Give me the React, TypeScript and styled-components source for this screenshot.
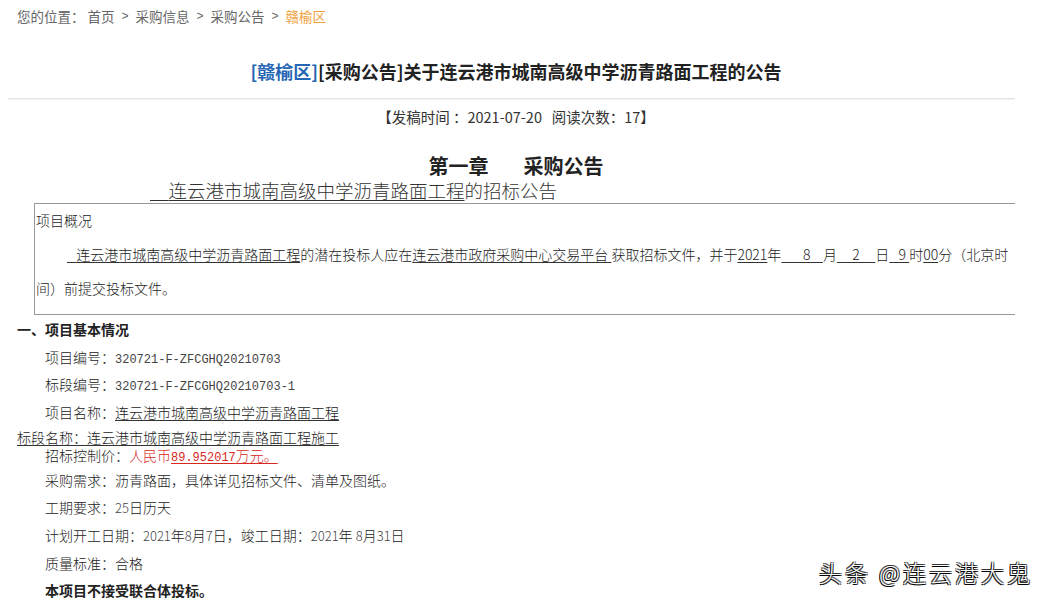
import { createGlobalStyle } from "styled-components";
import styled from "styled-components";

const GlobalStyle = createGlobalStyle`
  html, body {
    margin: 0;
    padding: 0;
    background: #fff;
  }
  body {
    font-family: "Noto Sans CJK SC", "Noto Sans", sans-serif;
    color: #333;
  }
`;

const Page = styled.div`
  position: relative;
  width: 1051px;
  height: 606px;
  box-sizing: border-box;
  padding: 0 27px 0 8px;
  overflow: hidden;
`;
const Crumbs = styled.div`
  display: flex;
  align-items: center;
  height: 32px;
  padding-left: 9px;
  font-size: 13.5px;
  color: #666;
`;
const CrumbSep = styled.span`
  margin: 0 7px;
  font-family: "Liberation Sans", sans-serif;
  font-size: 12px;
`;
const CrumbCurrent = styled.span`
  color: #f0a13c;
`;
const Title = styled.h1`
  margin: 24px 0 0;
  text-align: center;
  font-size: 18px;
  line-height: 30px;
  font-weight: bold;
  color: #222;
`;
const Area = styled.span`
  color: #2566b5;
`;
const Rule = styled.div`
  margin: 12px 9px 0 0;
  border-top: 1px solid #e4e4e4;
  border-bottom: 1px solid #f2f2f2;
`;
const Meta = styled.div`
  margin-top: 7px;
  text-align: center;
  font-size: 14.5px;
  line-height: 20px;
  color: #333;
  white-space: pre;
`;
const Chapter = styled.div`
  display: flex;
  justify-content: center;
  gap: 35px;
  margin-top: 25px;
  font-size: 20px;
  line-height: 28px;
  font-weight: bold;
  color: #222;
`;
const Subtitle = styled.div`
  padding-left: 142px;
  font-size: 18.5px;
  line-height: 20px;
  font-weight: 300;
  color: #333;
`;
const U = styled.span<{ $color?: string }>`
  text-decoration: underline;
  text-decoration-color: ${({ $color }) => $color ?? "#333"};
  text-underline-offset: 2px;
  white-space: pre;
`;
const Outline = styled.div`
  margin: 3px 9px 0 26px;
  padding: 6px 0 9px 1px;
  border-top: 1px solid #999;
  border-left: 1px solid #999;
  border-bottom: 1px solid #999;
  font-size: 14px;
  font-weight: 300;
  color: #222;
`;
const OutlineHead = styled.div`
  line-height: 20px;
`;
const OutlineText = styled.div`
  margin-top: 7px;
  line-height: 34px;
  text-indent: 31px;
  white-space: nowrap;
`;
const Heading = styled.div`
  margin-top: 4px;
  padding-left: 9px;
  font-size: 14px;
  line-height: 20px;
  font-weight: bold;
  color: #222;
`;
const Row = styled.div<{ $indent?: number; $mt: number; $bold?: boolean }>`
  height: 20px;
  margin-top: ${({ $mt }) => $mt}px;
  padding-left: ${({ $indent }) => $indent ?? 37}px;
  font-size: 14px;
  line-height: 20px;
  font-weight: ${({ $bold }) => ($bold ? "bold" : 300)};
  color: #222;
  white-space: pre;
`;
const Code = styled.span<{ $color?: string }>`
  font-family: "Liberation Mono", monospace;
  font-size: 12px;
  color: ${({ $color }) => $color ?? "#444"};
`;
const Num = styled.span`
  font-size: 13px;
  color: #444;
`;
const Red = styled.span`
  color: #d9281e;
`;
const Watermark = styled.div`
  position: absolute;
  right: 18px;
  bottom: 17px;
  font-size: 23px;
  font-weight: 300;
  letter-spacing: 3px;
  color: #fff;
  text-shadow: -1px 1px 0 #000, 1px 1px 0 #333, -1px -1px 0 #333,
    1px -1px 0 #666;
`;

export default function App() {
  return (
    <Page>
      <GlobalStyle />
      <Crumbs>
        您的位置：&nbsp;首页<CrumbSep>&gt;</CrumbSep>采购信息<CrumbSep>&gt;</CrumbSep>
        采购公告<CrumbSep>&gt;</CrumbSep>
        <CrumbCurrent>赣榆区</CrumbCurrent>
      </Crumbs>
      <Title>
        <Area>[赣榆区]</Area>[采购公告]关于连云港市城南高级中学沥青路面工程的公告
      </Title>
      <Rule />
      <Meta>【发稿时间 ：2021-07-20   阅读次数：17】</Meta>
      <Chapter>
        <span>第一章</span>
        <span>采购公告</span>
      </Chapter>
      <Subtitle>
        <U>{"\u3000"}连云港市城南高级中学沥青路面工程</U>的招标公告
      </Subtitle>
      <Outline>
        <OutlineHead>项目概况</OutlineHead>
        <OutlineText>
          <U>{"   "}连云港市城南高级中学沥青路面工程</U>的潜在投标人应在
          <U>连云港市政府采购中心交易平台 </U>获取招标文件，并于<U>2021</U>年
          <U>{"       8    "}</U>月<U>{"     2     "}</U>日<U>{"   9 "}</U>时
          <U>00</U>分（北京时
          <br />
          间）前提交投标文件。
        </OutlineText>
      </Outline>
      <Heading>一、项目基本情况</Heading>
      <Row $mt={8}>
        项目编号：<Code>320721-F-ZFCGHQ20210703</Code>
      </Row>
      <Row $mt={7}>
        标段编号：<Code>320721-F-ZFCGHQ20210703-1</Code>
      </Row>
      <Row $mt={8}>
        项目名称：<U>连云港市城南高级中学沥青路面工程</U>
      </Row>
      <Row $mt={5} $indent={9}>
        <U>标段名称：连云港市城南高级中学沥青路面工程施工</U>
      </Row>
      <Row $mt={-2}>
        招标控制价：<Red>人民币</Red>
        <U $color="#d9281e">
          <Red>
            <Code $color="#d9281e">89.952017</Code>万元。
          </Red>
        </U>
      </Row>
      <Row $mt={5}>采购需求：沥青路面，具体详见招标文件、清单及图纸。</Row>
      <Row $mt={7}>
        工期要求：<Num>25</Num>日历天
      </Row>
      <Row $mt={8}>
        计划开工日期：<Num>2021</Num>年<Num>8</Num>月<Num>7</Num>日，竣工日期：<Num>2021</Num>年 <Num>8</Num>月<Num>31</Num>日
      </Row>
      <Row $mt={8}>质量标准：合格</Row>
      <Row $mt={7} $bold>
        本项目不接受联合体投标。
      </Row>
      <Watermark>头条 @连云港大鬼</Watermark>
    </Page>
  );
}
